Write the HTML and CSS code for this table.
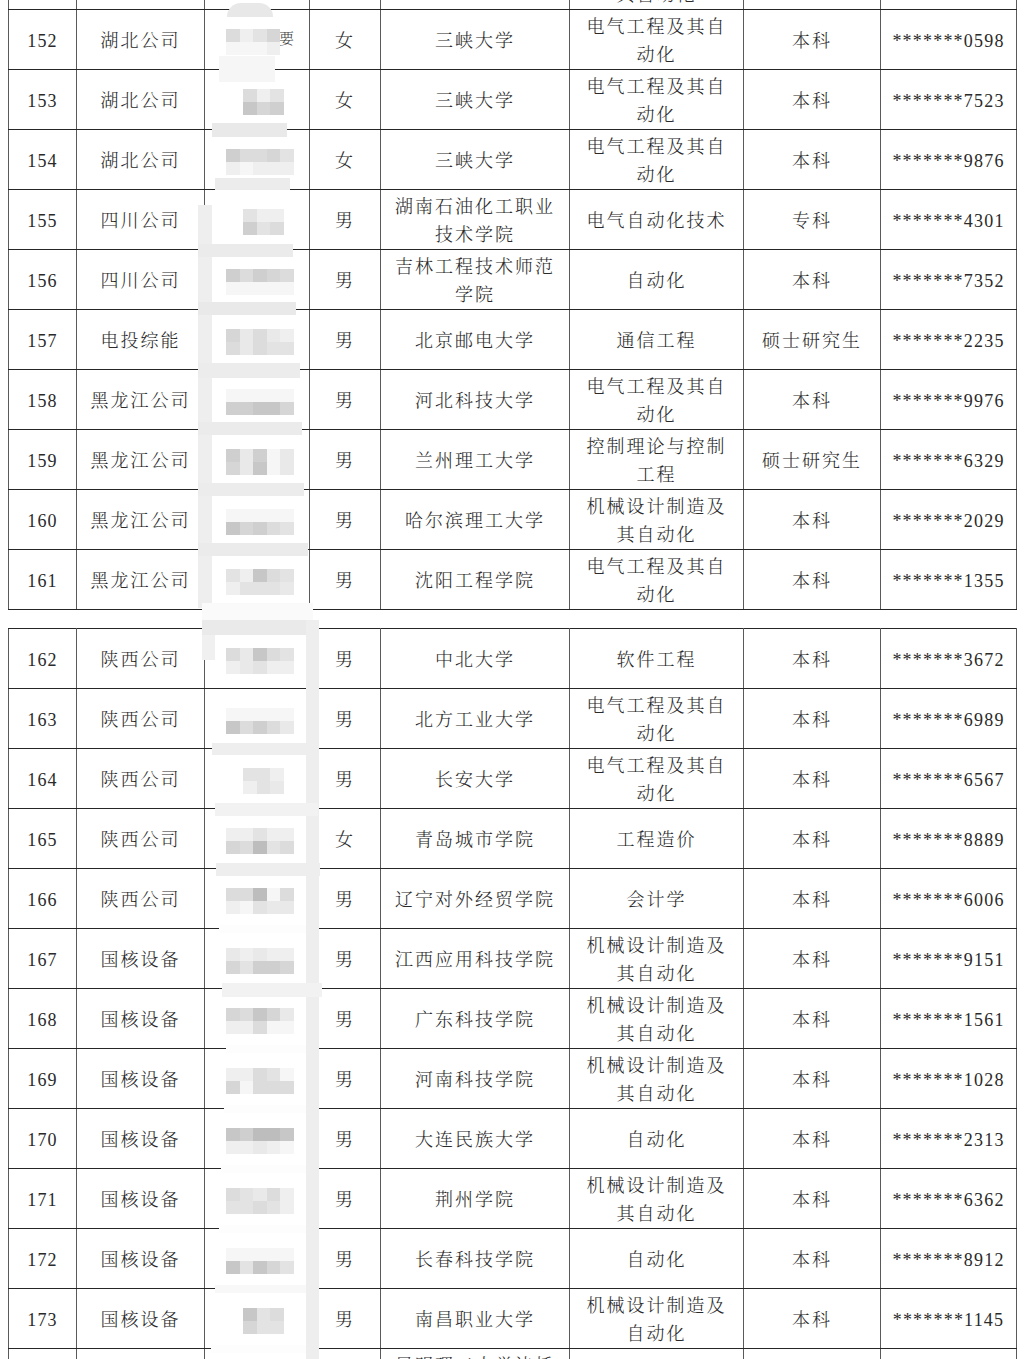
FILE: index.html
```html
<!DOCTYPE html>
<html lang="zh">
<head>
<meta charset="utf-8">
<title>名单</title>
<link rel="stylesheet" href="styles.css">
</head>
<body>
<div class="page">
<table class="sheet first">
<colgroup><col class="c1"><col class="c2"><col class="c3"><col class="c4"><col class="c5"><col class="c6"><col class="c7"><col class="c8"></colgroup>
<tbody>
<tr><td class="num"></td><td></td><td class="nm"></td><td></td><td></td><td>机械设计制造及其自动化</td><td></td><td class="num"></td></tr>
<tr><td class="num">152</td><td>湖北公司</td><td class="nm"><div class="mz"><i class="g5"></i><i class="g8"></i><i class="g6"></i><i class="g4"></i><b class="frag">要</b><i class="g9"></i><i class="g9"></i><i class="g9"></i><i class="g8"></i></div></td><td>女</td><td>三峡大学</td><td>电气工程及其自动化</td><td>本科</td><td class="num">*******0598</td></tr>
<tr><td class="num">153</td><td>湖北公司</td><td class="nm"><div class="mz c3"><i class="g5"></i><i class="g8"></i><i class="g6"></i><i class="g2"></i><i class="g4"></i><i class="g3"></i></div></td><td>女</td><td>三峡大学</td><td>电气工程及其自动化</td><td>本科</td><td class="num">*******7523</td></tr>
<tr><td class="num">154</td><td>湖北公司</td><td class="nm"><div class="mz"><i class="g3"></i><i class="g5"></i><i class="g5"></i><i class="g4"></i><i class="g6"></i><i class="g8"></i><i class="g9"></i><i class="g8"></i><i class="g8"></i><i class="g8"></i></div></td><td>女</td><td>三峡大学</td><td>电气工程及其自动化</td><td>本科</td><td class="num">*******9876</td></tr>
<tr><td class="num">155</td><td>四川公司</td><td class="nm"><div class="mz c3"><i class="g6"></i><i class="g8"></i><i class="g8"></i><i class="g3"></i><i class="g6"></i><i class="g5"></i></div></td><td>男</td><td>湖南石油化工职业技术学院</td><td>电气自动化技术</td><td>专科</td><td class="num">*******4301</td></tr>
<tr><td class="num">156</td><td>四川公司</td><td class="nm"><div class="mz"><i class="g3"></i><i class="g5"></i><i class="g3"></i><i class="g4"></i><i class="g5"></i><i class="g9"></i><i class="g9"></i><i class="g9"></i><i class="g9"></i><i class="g9"></i></div></td><td>男</td><td>吉林工程技术师范学院</td><td>自动化</td><td>本科</td><td class="num">*******7352</td></tr>
<tr><td class="num">157</td><td>电投综能</td><td class="nm"><div class="mz"><i class="g4"></i><i class="g7"></i><i class="g5"></i><i class="g7"></i><i class="g8"></i><i class="g5"></i><i class="g7"></i><i class="g5"></i><i class="g6"></i><i class="g6"></i></div></td><td>男</td><td>北京邮电大学</td><td>通信工程</td><td>硕士研究生</td><td class="num">*******2235</td></tr>
<tr><td class="num">158</td><td>黑龙江公司</td><td class="nm"><div class="mz"><i class="g9"></i><i class="g9"></i><i class="g9"></i><i class="g9"></i><i class="g9"></i><i class="g3"></i><i class="g3"></i><i class="g2"></i><i class="g2"></i><i class="g4"></i></div></td><td>男</td><td>河北科技大学</td><td>电气工程及其自动化</td><td>本科</td><td class="num">*******9976</td></tr>
<tr><td class="num">159</td><td>黑龙江公司</td><td class="nm"><div class="mz"><i class="g3"></i><i class="g7"></i><i class="g3"></i><i class="g9"></i><i class="g7"></i><i class="g4"></i><i class="g7"></i><i class="g2"></i><i class="g9"></i><i class="g7"></i></div></td><td>男</td><td>兰州理工大学</td><td>控制理论与控制工程</td><td>硕士研究生</td><td class="num">*******6329</td></tr>
<tr><td class="num">160</td><td>黑龙江公司</td><td class="nm"><div class="mz"><i class="g9"></i><i class="g9"></i><i class="g9"></i><i class="g9"></i><i class="g9"></i><i class="g2"></i><i class="g4"></i><i class="g3"></i><i class="g5"></i><i class="g6"></i></div></td><td>男</td><td>哈尔滨理工大学</td><td>机械设计制造及其自动化</td><td>本科</td><td class="num">*******2029</td></tr>
<tr><td class="num">161</td><td>黑龙江公司</td><td class="nm"><div class="mz"><i class="g6"></i><i class="g8"></i><i class="g2"></i><i class="g5"></i><i class="g6"></i><i class="g8"></i><i class="g6"></i><i class="g6"></i><i class="g6"></i><i class="g7"></i></div></td><td>男</td><td>沈阳工程学院</td><td>电气工程及其自动化</td><td>本科</td><td class="num">*******1355</td></tr>
</tbody>
</table>

<table class="sheet second">
<colgroup><col class="c1"><col class="c2"><col class="c3"><col class="c4"><col class="c5"><col class="c6"><col class="c7"><col class="c8"></colgroup>
<tbody>
<tr><td class="num">162</td><td>陕西公司</td><td class="nm"><div class="mz"><i class="g5"></i><i class="g7"></i><i class="g2"></i><i class="g5"></i><i class="g6"></i><i class="g8"></i><i class="g7"></i><i class="g6"></i><i class="g8"></i><i class="g8"></i></div></td><td>男</td><td>中北大学</td><td>软件工程</td><td>本科</td><td class="num">*******3672</td></tr>
<tr><td class="num">163</td><td>陕西公司</td><td class="nm"><div class="mz"><i class="g9"></i><i class="g9"></i><i class="g9"></i><i class="g9"></i><i class="g9"></i><i class="g2"></i><i class="g5"></i><i class="g3"></i><i class="g5"></i><i class="g7"></i></div></td><td>男</td><td>北方工业大学</td><td>电气工程及其自动化</td><td>本科</td><td class="num">*******6989</td></tr>
<tr><td class="num">164</td><td>陕西公司</td><td class="nm"><div class="mz c3"><i class="g6"></i><i class="g6"></i><i class="g8"></i><i class="g8"></i><i class="g6"></i><i class="g7"></i></div></td><td>男</td><td>长安大学</td><td>电气工程及其自动化</td><td>本科</td><td class="num">*******6567</td></tr>
<tr><td class="num">165</td><td>陕西公司</td><td class="nm"><div class="mz"><i class="g8"></i><i class="g8"></i><i class="g6"></i><i class="g8"></i><i class="g8"></i><i class="g4"></i><i class="g5"></i><i class="g1"></i><i class="g6"></i><i class="g5"></i></div></td><td>女</td><td>青岛城市学院</td><td>工程造价</td><td>本科</td><td class="num">*******8889</td></tr>
<tr><td class="num">166</td><td>陕西公司</td><td class="nm"><div class="mz"><i class="g5"></i><i class="g5"></i><i class="g1"></i><i class="g9"></i><i class="g5"></i><i class="g8"></i><i class="g9"></i><i class="g6"></i><i class="g7"></i><i class="g7"></i></div></td><td>男</td><td>辽宁对外经贸学院</td><td>会计学</td><td>本科</td><td class="num">*******6006</td></tr>
<tr><td class="num">167</td><td>国核设备</td><td class="nm"><div class="mz"><i class="g7"></i><i class="g8"></i><i class="g7"></i><i class="g8"></i><i class="g8"></i><i class="g4"></i><i class="g6"></i><i class="g3"></i><i class="g3"></i><i class="g4"></i></div></td><td>男</td><td>江西应用科技学院</td><td>机械设计制造及其自动化</td><td>本科</td><td class="num">*******9151</td></tr>
<tr><td class="num">168</td><td>国核设备</td><td class="nm"><div class="mz"><i class="g4"></i><i class="g5"></i><i class="g2"></i><i class="g4"></i><i class="g7"></i><i class="g8"></i><i class="g8"></i><i class="g5"></i><i class="g9"></i><i class="g9"></i></div></td><td>男</td><td>广东科技学院</td><td>机械设计制造及其自动化</td><td>本科</td><td class="num">*******1561</td></tr>
<tr><td class="num">169</td><td>国核设备</td><td class="nm"><div class="mz"><i class="g8"></i><i class="g8"></i><i class="g5"></i><i class="g6"></i><i class="g9"></i><i class="g4"></i><i class="g9"></i><i class="g5"></i><i class="g5"></i><i class="g5"></i></div></td><td>男</td><td>河南科技学院</td><td>机械设计制造及其自动化</td><td>本科</td><td class="num">*******1028</td></tr>
<tr><td class="num">170</td><td>国核设备</td><td class="nm"><div class="mz"><i class="g2"></i><i class="g3"></i><i class="g1"></i><i class="g1"></i><i class="g2"></i><i class="g8"></i><i class="g8"></i><i class="g7"></i><i class="g8"></i><i class="g9"></i></div></td><td>男</td><td>大连民族大学</td><td>自动化</td><td>本科</td><td class="num">*******2313</td></tr>
<tr><td class="num">171</td><td>国核设备</td><td class="nm"><div class="mz"><i class="g5"></i><i class="g6"></i><i class="g7"></i><i class="g5"></i><i class="g8"></i><i class="g6"></i><i class="g6"></i><i class="g5"></i><i class="g6"></i><i class="g8"></i></div></td><td>男</td><td>荆州学院</td><td>机械设计制造及其自动化</td><td>本科</td><td class="num">*******6362</td></tr>
<tr><td class="num">172</td><td>国核设备</td><td class="nm"><div class="mz"><i class="g9"></i><i class="g9"></i><i class="g9"></i><i class="g9"></i><i class="g9"></i><i class="g2"></i><i class="g6"></i><i class="g2"></i><i class="g4"></i><i class="g6"></i></div></td><td>男</td><td>长春科技学院</td><td>自动化</td><td>本科</td><td class="num">*******8912</td></tr>
<tr><td class="num">173</td><td>国核设备</td><td class="nm"><div class="mz c3"><i class="g2"></i><i class="g6"></i><i class="g5"></i><i class="g4"></i><i class="g6"></i><i class="g6"></i></div></td><td>男</td><td>南昌职业大学</td><td>机械设计制造及自动化</td><td>本科</td><td class="num">*******1145</td></tr>
<tr><td class="num"></td><td></td><td class="nm"></td><td></td><td>昆明理工大学津桥学院</td><td></td><td></td><td class="num"></td></tr>
</tbody>
</table>
</div>

<div class="smear" aria-hidden="true">
<i class="blob"></i>
<i class="p1"></i><i class="p2"></i><i class="p3"></i>
<i class="sl1"></i>
<i class="p4"></i><i class="p5"></i><i class="p6"></i><i class="p7"></i><i class="p8"></i><i class="p9"></i>
<i class="gap1"></i><i class="gap2"></i><i class="sl2"></i><i class="sr"></i>
<i class="q1"></i><i class="q2"></i><i class="q3"></i><i class="q4"></i><i class="q5"></i><i class="q6"></i><i class="q7"></i><i class="q8"></i><i class="q9"></i><i class="q10"></i><i class="q11"></i>
</div>
</body>
</html>
```

FILE: styles.css
```css
* { box-sizing: border-box; }
html, body { height: 1359px; overflow: hidden; }
body {
  margin: 0;
  background: #fff;
  position: relative;
  color: #2a2a2a;
  font-family: "Liberation Serif", "Noto Serif CJK SC", "Noto Sans CJK SC", serif;
  font-weight: 300;
}
.page { padding-left: 8px; }

.sheet {
  border-collapse: collapse;
  table-layout: fixed;
  width: 1008px;
}
.first { margin-top: -51px; }
.second { margin-top: 18px; }

.c1 { width: 68px; }
.c2 { width: 128px; }
.c3 { width: 105px; }
.c4 { width: 71px; }
.c5 { width: 189px; }
.c6 { width: 174px; }
.c7 { width: 137px; }
.c8 { width: 136px; }

.sheet td {
  height: 60px;
  padding: 3px 8px 0;
  text-align: center;
  vertical-align: middle;
  font-size: 18px;
  line-height: 28px;
  letter-spacing: 2px;
  border-top: 1px solid #262626;
  border-bottom: 1px solid #262626;
  border-left: 1px solid #5a5a5a;
  border-right: 1px solid #5a5a5a;
}
.sheet td.num { letter-spacing: 1.2px; font-weight: 400; padding: 3px 2px 0; }
.sheet td.nm { padding: 0 0 0 6px; }

.mz {
  display: grid;
  grid-template-columns: repeat(5, 13.6px);
  grid-auto-rows: 13px;
  justify-content: center;
  margin-top: 5px;
}
.mz.c3 { grid-template-columns: repeat(3, 13.6px); }
.mz i { display: block; }
.mz .frag {
  grid-row: span 2;
  font-weight: 300;
  font-size: 15px;
  line-height: 20px;
  letter-spacing: 0;
  color: #444;
  overflow: hidden;
  text-align: right;
  direction: rtl;
}
.g1 { background: #bdbdbd; }
.g2 { background: #c7c7c7; }
.g3 { background: #cfcfcf; }
.g4 { background: #d6d6d6; }
.g5 { background: #dcdcdc; }
.g6 { background: #e3e3e3; }
.g7 { background: #e9e9e9; }
.g8 { background: #efefef; }
.g9 { background: #f6f6f6; }

/* whitening smear drawn over the name column */
.smear { position: absolute; left: 0; top: 0; width: 1026px; height: 1359px; pointer-events: none; }
.smear i { position: absolute; display: block; }
.blob { left: 227px; top: 3px; width: 46px; height: 14px; background: #e8e8e8; border-radius: 23px 23px 0 0; }
.p1 { left: 219px; top: 56px; width: 56px; height: 26px; background: #f6f6f6; }
.p2 { left: 212px; top: 123px; width: 75px; height: 14px; background: #e9e9e9; }
.p3 { left: 215px; top: 178px; width: 75px; height: 12px; background: #ececec; }
.sl1 { left: 198px; top: 205px; width: 14px; height: 403px; background: #eeeeee; }
.p4 { left: 198px; top: 244px; width: 95px; height: 13px; background: #ebebeb; }
.p5 { left: 198px; top: 302px; width: 98px; height: 13px; background: #e9e9e9; }
.p6 { left: 198px; top: 363px; width: 102px; height: 15px; background: #ececec; }
.p7 { left: 198px; top: 422px; width: 104px; height: 13px; background: #ebebeb; }
.p8 { left: 198px; top: 483px; width: 106px; height: 13px; background: #ececec; }
.p9 { left: 198px; top: 543px; width: 110px; height: 13px; background: #ebebeb; }
.gap1 { left: 202px; top: 603px; width: 111px; height: 17px; background: #fafafa; }
.gap2 { left: 202px; top: 620px; width: 117px; height: 15px; background: #eaeaea; }
.sl2 { left: 202px; top: 635px; width: 13px; height: 25px; background: #f0f0f0; }
.sr { left: 306px; top: 620px; width: 13px; height: 739px; background: #eeeeee; }
.q1 { left: 212px; top: 743px; width: 106px; height: 12px; background: #eeeeee; }
.q2 { left: 215px; top: 803px; width: 103px; height: 13px; background: #f2f2f2; }
.q3 { left: 216px; top: 863px; width: 104px; height: 13px; background: #eeeeee; }
.q4 { left: 219px; top: 925px; width: 87px; height: 8px; background: #fdfdfd; }
.q5 { left: 222px; top: 983px; width: 100px; height: 14px; background: #f2f2f2; }
.q6 { left: 226px; top: 1045px; width: 80px; height: 8px; background: #fdfdfd; }
.q7 { left: 224px; top: 1105px; width: 82px; height: 8px; background: #fdfdfd; }
.q8 { left: 221px; top: 1165px; width: 85px; height: 8px; background: #fdfdfd; }
.q9 { left: 219px; top: 1225px; width: 87px; height: 8px; background: #fdfdfd; }
.q10 { left: 215px; top: 1285px; width: 91px; height: 8px; background: #f8f8f8; }
.q11 { left: 211px; top: 1345px; width: 95px; height: 8px; background: #fdfdfd; }
```
